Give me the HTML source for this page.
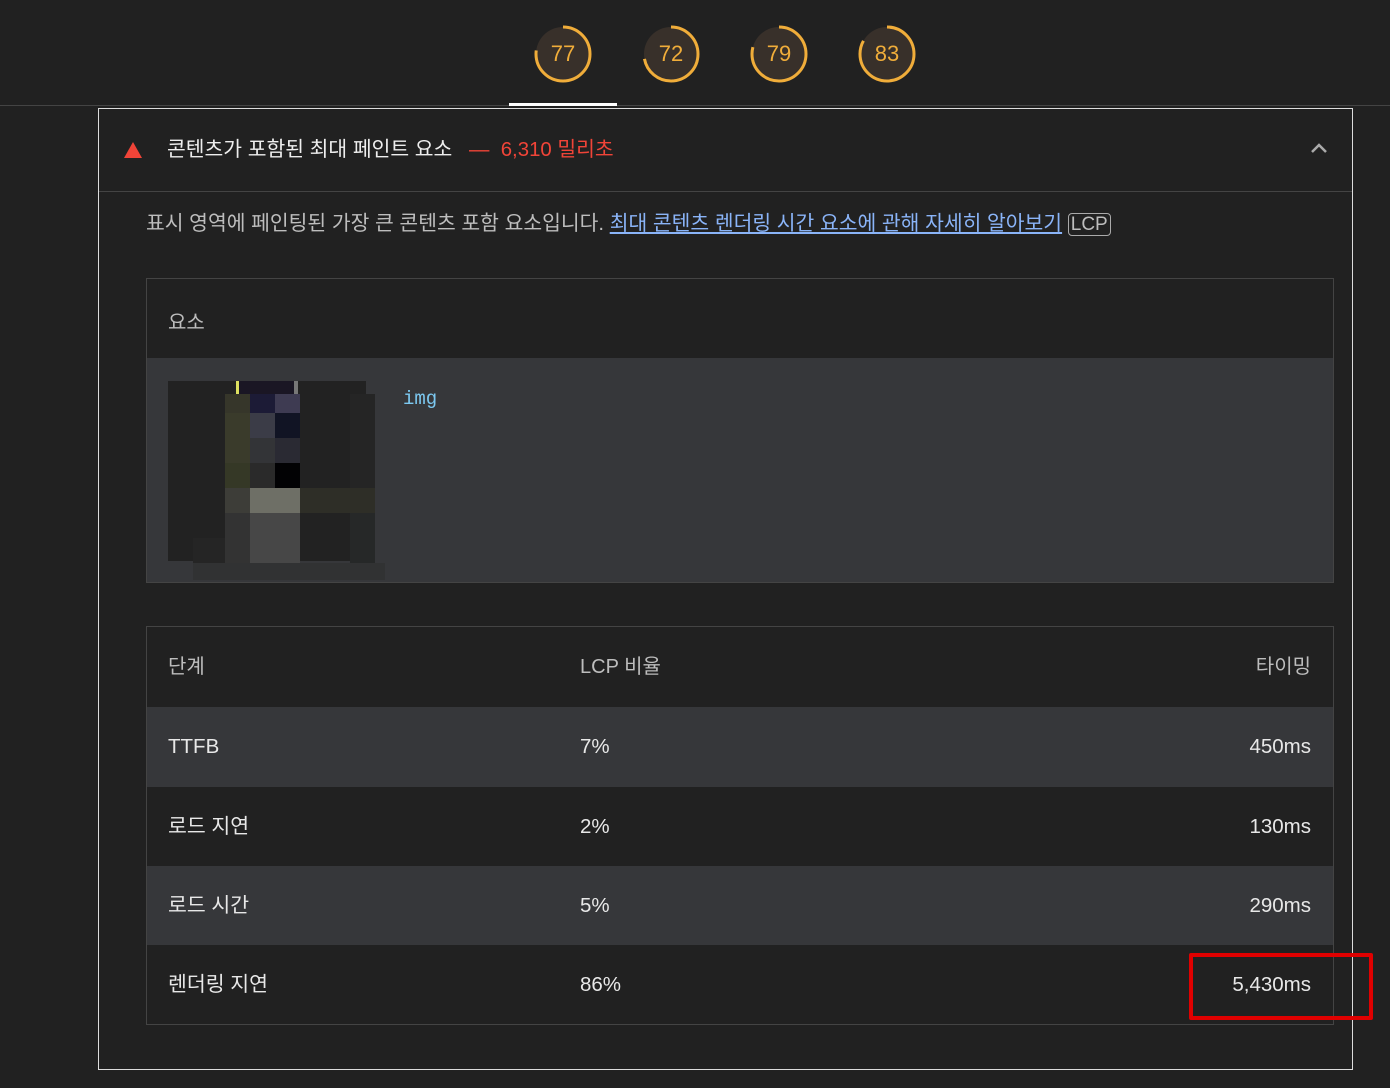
<!DOCTYPE html>
<html><head><meta charset="utf-8"><style>
*{margin:0;padding:0;box-sizing:border-box}
body{width:1390px;height:1088px;background:#212121;position:relative;overflow:hidden;font-family:"Liberation Sans","Noto Sans CJK KR",sans-serif;color:#e8e8e8}
.a{position:absolute}
.g{position:absolute;top:24px;width:60px;height:60px}
.g span{position:absolute;left:0;top:0;width:60px;height:60px;line-height:60px;text-align:center;color:#f0ad3a;font-size:22px}
.row{position:absolute;left:147px;width:1186px;height:80px;font-size:20.5px}
.row div{position:absolute;top:0;line-height:80px}
.c1{left:21px}.c2{left:433px}.c3{right:22px}
.px{position:absolute}
</style></head><body>
<div class="a" style="left:0;top:105px;width:1390px;height:1px;background:#444"></div>
<div class="a" style="left:509px;top:103px;width:108px;height:3px;background:#fff"></div>

<div class="g" style="left:533px"><svg width="60" height="60"><circle cx="30" cy="30" r="27" fill="#38302a"/><circle cx="30" cy="30" r="27" fill="none" stroke="#f0ad3a" stroke-width="3" stroke-dasharray="130.6 200" transform="rotate(-90 30 30)"/></svg><span>77</span></div>
<div class="g" style="left:641px"><svg width="60" height="60"><circle cx="30" cy="30" r="27" fill="#38302a"/><circle cx="30" cy="30" r="27" fill="none" stroke="#f0ad3a" stroke-width="3" stroke-dasharray="122.1 200" transform="rotate(-90 30 30)"/></svg><span>72</span></div>
<div class="g" style="left:749px"><svg width="60" height="60"><circle cx="30" cy="30" r="27" fill="#38302a"/><circle cx="30" cy="30" r="27" fill="none" stroke="#f0ad3a" stroke-width="3" stroke-dasharray="134 200" transform="rotate(-90 30 30)"/></svg><span>79</span></div>
<div class="g" style="left:857px"><svg width="60" height="60"><circle cx="30" cy="30" r="27" fill="#38302a"/><circle cx="30" cy="30" r="27" fill="none" stroke="#f0ad3a" stroke-width="3" stroke-dasharray="140.8 200" transform="rotate(-90 30 30)"/></svg><span>83</span></div>

<div class="a" style="left:98px;top:108px;width:1255px;height:962px;border:1px solid #ddd"></div>
<div class="a" style="left:99px;top:191px;width:1253px;height:1px;background:#444"></div>
<svg class="a" style="left:123px;top:141px" width="20" height="18"><polygon points="10,1 19,17 1,17" fill="#f04438"/></svg>
<div class="a" style="left:167px;top:137px;font-size:20.4px;line-height:26px;color:#eee">콘텐츠가 포함된 최대 페인트 요소</div>
<div class="a" style="left:469px;top:137px;font-size:20.4px;line-height:26px;color:#f04438">— &nbsp;6,310 밀리초</div>
<svg class="a" style="left:1309px;top:141px" width="20" height="14"><polyline points="3,11 10,4 17,11" fill="none" stroke="#aaa" stroke-width="2.5"/></svg>

<div class="a" style="left:146px;top:211px;font-size:20.4px;line-height:26px;color:#bdbdbd;white-space:nowrap">표시 영역에 페인팅된 가장 큰 콘텐츠 포함 요소입니다. <span style="color:#8ab4f8;text-decoration:underline">최대 콘텐츠 렌더링 시간 요소에 관해 자세히 알아보기</span> <span style="border:1px solid #aaa;border-radius:4px;padding:0 2px;font-size:19px">LCP</span></div>

<div class="a" style="left:146px;top:278px;width:1188px;height:305px;border:1px solid #444"></div>
<div class="a" style="left:168px;top:306px;font-size:20px;color:#bdbdbd">요소</div>
<div class="a" style="left:147px;top:358px;width:1186px;height:224px;background:#36373a"></div>
<div class="px" style="left:168px;top:381px;width:198px;height:180px;background:#222"></div>
<div class="px" style="left:193px;top:563px;width:192px;height:17px;background:#313233"></div>
<div class="px" style="left:193px;top:538px;width:32px;height:25px;background:#252525"></div>
<div class="px" style="left:236px;top:381px;width:3px;height:13px;background:#dde060"></div>
<div class="px" style="left:239px;top:381px;width:55px;height:13px;background:#1a1624"></div>
<div class="px" style="left:294px;top:381px;width:4px;height:13px;background:#777"></div>
<div class="px" style="left:225px;top:394px;width:25px;height:19px;background:#36362a"></div>
<div class="px" style="left:250px;top:394px;width:25px;height:19px;background:#1c1b36"></div>
<div class="px" style="left:275px;top:394px;width:25px;height:19px;background:#3e3b52"></div>
<div class="px" style="left:225px;top:413px;width:25px;height:50px;background:#3a3b2b"></div>
<div class="px" style="left:250px;top:413px;width:25px;height:25px;background:#3b3c47"></div>
<div class="px" style="left:275px;top:413px;width:25px;height:25px;background:#111424"></div>
<div class="px" style="left:250px;top:438px;width:25px;height:25px;background:#333437"></div>
<div class="px" style="left:275px;top:438px;width:25px;height:25px;background:#2a2a33"></div>
<div class="px" style="left:225px;top:463px;width:25px;height:25px;background:#353826"></div>
<div class="px" style="left:250px;top:463px;width:25px;height:25px;background:#2a2a2a"></div>
<div class="px" style="left:275px;top:463px;width:25px;height:25px;background:#020204"></div>
<div class="px" style="left:225px;top:488px;width:25px;height:25px;background:#3d3d38"></div>
<div class="px" style="left:250px;top:488px;width:50px;height:25px;background:#6e6f66"></div>
<div class="px" style="left:300px;top:488px;width:75px;height:25px;background:#2e2e27"></div>
<div class="px" style="left:225px;top:513px;width:25px;height:50px;background:#333"></div>
<div class="px" style="left:250px;top:513px;width:50px;height:50px;background:#474747"></div>
<div class="px" style="left:350px;top:394px;width:25px;height:94px;background:#252525"></div>
<div class="px" style="left:350px;top:513px;width:25px;height:50px;background:#262828"></div>
<div class="a" style="left:403px;top:388px;font-family:'Liberation Mono',monospace;font-size:19px;color:#7cc8f0">img</div>

<div class="a" style="left:146px;top:626px;width:1188px;height:399px;border:1px solid #444"></div>
<div class="row" style="top:627px;color:#bdbdbd;font-size:20px"><div class="c1">단계</div><div class="c2">LCP 비율</div><div class="c3">타이밍</div></div>
<div class="row" style="top:707px;background:#36373a;height:80px"><div class="c1">TTFB</div><div class="c2">7%</div><div class="c3">450ms</div></div>
<div class="row" style="top:787px;height:79px"><div class="c1">로드 지연</div><div class="c2">2%</div><div class="c3">130ms</div></div>
<div class="row" style="top:866px;background:#36373a;height:79px"><div class="c1">로드 시간</div><div class="c2">5%</div><div class="c3">290ms</div></div>
<div class="row" style="top:945px;height:79px"><div class="c1">렌더링 지연</div><div class="c2">86%</div><div class="c3">5,430ms</div></div>
<div class="a" style="left:1189px;top:953px;width:184px;height:67px;border:4px solid #e00000;border-radius:2px"></div>
</body></html>
